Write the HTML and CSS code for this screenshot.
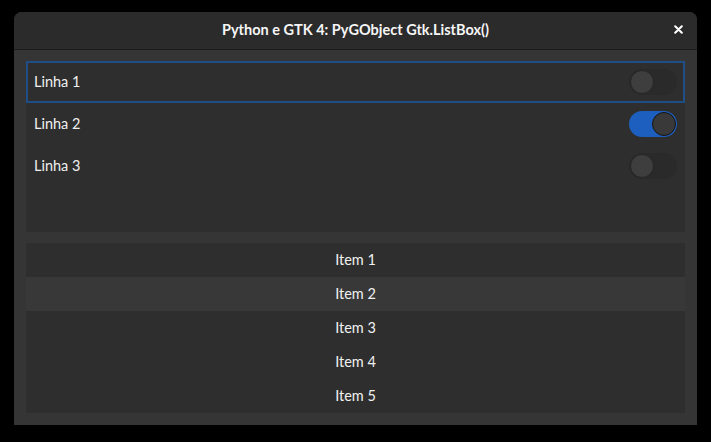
FILE: index.html
```html
<!DOCTYPE html>
<html lang="pt">
<head>
<meta charset="utf-8">
<title>Python e GTK 4: PyGObject Gtk.ListBox()</title>
<link rel="stylesheet" href="styles.css">
</head>
<body>
<div class="window">
  <header class="headerbar">
    <span class="title">Python e GTK 4: PyGObject Gtk.ListBox()</span>
    <button class="close" aria-label="Fechar">
      <svg width="9" height="9" viewBox="0 0 9 9"><path d="M1.2 1.2 L7.8 7.8 M7.8 1.2 L1.2 7.8" stroke="#fff" stroke-width="2" stroke-linecap="round"/></svg>
    </button>
  </header>
  <main class="content">
    <div class="listbox switches">
      <div class="row focused">
        <span class="label">Linha 1</span>
        <span class="switch"><span class="knob"></span></span>
      </div>
      <div class="row">
        <span class="label">Linha 2</span>
        <span class="switch on"><span class="knob"></span></span>
      </div>
      <div class="row">
        <span class="label">Linha 3</span>
        <span class="switch"><span class="knob"></span></span>
      </div>
    </div>
    <div class="listbox items">
      <div class="item">Item 1</div>
      <div class="item hover">Item 2</div>
      <div class="item">Item 3</div>
      <div class="item">Item 4</div>
      <div class="item">Item 5</div>
    </div>
  </main>
</div>
</body>
</html>
```
FILE: styles.css
```css
html, body {
  margin: 0;
  padding: 0;
  background: #000;
  width: 711px;
  height: 442px;
  overflow: hidden;
}
body {
  font-family: Lato, "Noto Sans", sans-serif;
  color: #f2f2f2;
  font-size: 14.5px;
}
.window {
  margin: 12px 0 0 14px;
  width: 683px;
  height: 413px;
  background: #353535;
  border-radius: 8px 8px 0 0;
  overflow: hidden;
  display: flex;
  flex-direction: column;
}
.headerbar {
  position: relative;
  height: 36px;
  background: #2b2b2b;
  border-bottom: 1px solid #1b1b1b;
  display: flex;
  align-items: center;
  justify-content: center;
  flex: none;
  padding-bottom: 1px;
  box-sizing: content-box;
}
.headerbar .title {
  margin-bottom: 2px;
}
.title {
  font-weight: 700;
  font-size: 14.5px;
  color: #f6f6f6;
}
.close {
  position: absolute;
  right: 14px;
  top: 13px;
  width: 9px;
  height: 9px;
  padding: 0;
  border: 0;
  background: none;
  display: flex;
}
.content {
  flex: 1;
  padding: 11px 12px 12px 12px;
  display: flex;
  flex-direction: column;
  gap: 11px;
}
.listbox {
  background: #2e2e2e;
}
.switches {
  height: 171px;
}
.row {
  height: 42px;
  box-sizing: border-box;
  display: flex;
  align-items: center;
  justify-content: space-between;
  padding: 0 8px;
}
.row.focused {
  outline: 2px solid #1f4e86;
  outline-offset: -2px;
}
.label {
  font-size: 14.5px;
  color: #f0f0f0;
  padding-bottom: 1px;
}
.switch {
  width: 48px;
  height: 26px;
  box-sizing: border-box;
  border-radius: 13px;
  background: #2a2a2a;
  display: flex;
  align-items: center;
  padding: 1px;
}
.switch .knob {
  width: 24px;
  height: 24px;
  box-sizing: border-box;
  border-radius: 50%;
  background: #3e3e3e;
  border: 1px solid #262626;
}
.switch.on {
  background: #1d5fbf;
  justify-content: flex-end;
}
.switch.on .knob {
  background: #393939;
  border-color: #151515;
}
.items {
  height: 170px;
}
.item {
  height: 34px;
  display: flex;
  align-items: center;
  justify-content: center;
  font-size: 14.5px;
  color: #f0f0f0;
  padding-bottom: 1px;
  box-sizing: border-box;
}
.item.hover {
  background: #383838;
}
```
